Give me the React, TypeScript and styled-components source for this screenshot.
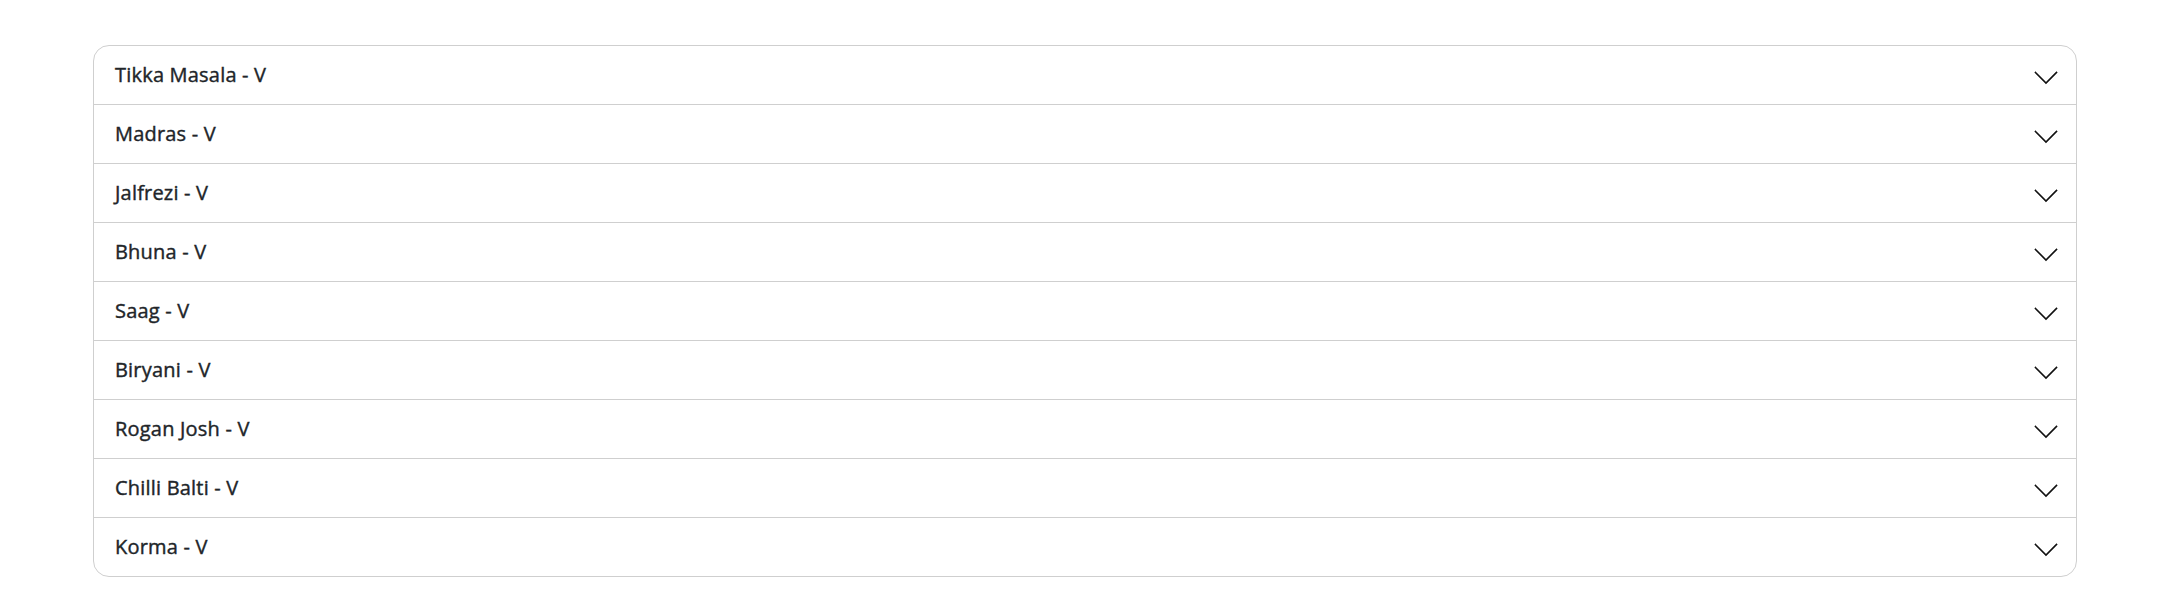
import React from "react";
import styled, { createGlobalStyle } from "styled-components";

const GlobalStyle = createGlobalStyle`
  html, body {
    margin: 0;
    padding: 0;
    background: #ffffff;
  }
  body {
    font-family: "Open Sans", "Noto Sans", sans-serif;
    color: #212529;
  }
`;

const Page = styled.div`
  padding: 45px 93px 0 93px;
`;

const Accordion = styled.div`
  border: 1px solid #cfcfcf;
  border-radius: 16px;
  overflow: hidden;
  background: #fff;
`;

const Item = styled.div`
  & + & {
    border-top: 1px solid #cfcfcf;
  }
`;

const Header = styled.button`
  display: flex;
  align-items: center;
  justify-content: space-between;
  width: 100%;
  height: 58px;
  padding: 0 18px 0 21px;
  border: none;
  background: transparent;
  cursor: pointer;
  font-family: "Open Sans", "Noto Sans", sans-serif;
  font-size: 20px;
  font-weight: 500;
  letter-spacing: 0.2px;
  color: #212529;
  -webkit-text-stroke: 0.4px #212529;
  text-align: left;
`;

const Title = styled.span`
  line-height: 1;
`;

const Chevron = styled.svg`
  width: 24px;
  height: 14px;
  margin-top: 6px;
  flex-shrink: 0;
`;

const dishes = [
  "Tikka Masala - V",
  "Madras - V",
  "Jalfrezi - V",
  "Bhuna - V",
  "Saag - V",
  "Biryani - V",
  "Rogan Josh - V",
  "Chilli Balti - V",
  "Korma - V",
];

export default function App() {
  return (
    <>
      <GlobalStyle />
      <Page>
        <Accordion>
          {dishes.map((d) => (
            <Item key={d}>
              <Header type="button">
                <Title>{d}</Title>
                <Chevron viewBox="0 0 24 14" fill="none">
                  <path
                    d="M1.5 1.5 L12 12 L22.5 1.5"
                    stroke="#111"
                    strokeWidth="1.6"
                    strokeLinecap="square"
                  />
                </Chevron>
              </Header>
            </Item>
          ))}
        </Accordion>
      </Page>
    </>
  );
}
